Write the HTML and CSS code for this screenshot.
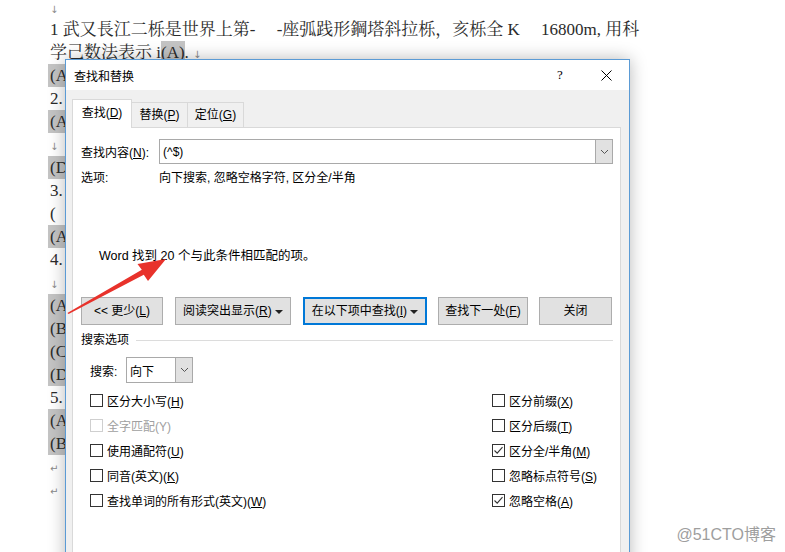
FILE: index.html
```html
<!DOCTYPE html>
<html lang="zh-CN">
<head>
  <meta charset="UTF-8">
  <title>查找和替换</title>
  <link rel="stylesheet" href="styles.css">
</head>
<body>

<div class="doc">
  <p class="first"><span class="pm">↓</span></p>
  <p>1 武又長江二栎是世界上第-&nbsp;&nbsp;&nbsp;&nbsp;&nbsp;-座弧践形鋼塔斜拉栎，亥栎全 K&nbsp;&nbsp;&nbsp;&nbsp;&nbsp;16800m,&nbsp;用科</p>
  <p>学己数法表示 i<span class="hl-in">(A)</span>. <span class="pm">↓</span></p>
  <p><span class="hl">(A</span></p>
  <p>2.</p>
  <p><span class="hl">(A</span></p>
  <p><span class="pm">↓</span></p>
  <p><span class="hl">(D</span></p>
  <p>3.</p>
  <p>(</p>
  <p><span class="hl">(A</span></p>
  <p>4.</p>
  <p><span class="pm">↓</span></p>
  <p><span class="hl">(A</span></p>
  <p><span class="hl">(B</span></p>
  <p><span class="hl">(C</span></p>
  <p><span class="hl">(D</span></p>
  <p>5.</p>
  <p><span class="hl">(A</span></p>
  <p><span class="hl">(B</span></p>
  <p><span class="pm">↵</span></p>
  <p><span class="pm">↵</span></p>
</div>

<div class="dialog">
  <div class="titlebar">
    <span class="title">查找和替换</span>
    <span class="help">?</span>
    <span class="close">
      <svg width="11" height="11" viewBox="0 0 11 11"><path d="M0.5 0.5 L10.5 10.5 M10.5 0.5 L0.5 10.5" stroke="#000" stroke-width="1" fill="none"/></svg>
    </span>
  </div>

  <div class="tabs">
    <div class="tab active">查找(<u>D</u>)</div>
    <div class="tab">替换(<u>P</u>)</div>
    <div class="tab">定位(<u>G</u>)</div>
  </div>

  <div class="panel">
    <div class="find-row">
      <label class="find-label">查找内容(<u>N</u>):</label>
      <div class="combo">
        <span class="combo-text">(^$)</span>
        <span class="combo-drop">
          <svg width="9" height="6" viewBox="0 0 9 6"><path d="M1 1 L4.5 4.5 L8 1" stroke="#555" stroke-width="1" fill="none"/></svg>
        </span>
      </div>
    </div>

    <div class="opts-row">
      <span class="opts-label">选项:</span>
      <span>向下搜索, 忽略空格字符, 区分全/半角</span>
    </div>

    <div class="result">Word 找到 20 个与此条件相匹配的项。</div>

    <div class="buttons">
      <div class="btn b-less">&lt;&lt; 更少(<u>L</u>)</div>
      <div class="btn b-read">阅读突出显示(<u>R</u>) <span class="caret"></span></div>
      <div class="btn b-in focus">在以下项中查找(<u>I</u>) <span class="caret"></span></div>
      <div class="btn b-next">查找下一处(<u>F</u>)</div>
      <div class="btn b-close">关闭</div>
    </div>

    <div class="group-title">
      <span>搜索选项</span>
      <span class="rule"></span>
    </div>

    <div class="search-dir">
      <label class="dir-label">搜索:</label>
      <div class="select">
        <span class="select-text">向下</span>
        <span class="select-drop">
          <svg width="9" height="6" viewBox="0 0 9 6"><path d="M1 1 L4.5 4.5 L8 1" stroke="#555" stroke-width="1" fill="none"/></svg>
        </span>
      </div>
    </div>

    <div class="checks">
      <div class="col left">
        <div class="check"><span class="box"></span><span>区分大小写(<u>H</u>)</span></div>
        <div class="check disabled"><span class="box"></span><span>全字匹配(Y)</span></div>
        <div class="check"><span class="box"></span><span>使用通配符(<u>U</u>)</span></div>
        <div class="check"><span class="box"></span><span>同音(英文)(<u>K</u>)</span></div>
        <div class="check"><span class="box"></span><span>查找单词的所有形式(英文)(<u>W</u>)</span></div>
      </div>
      <div class="col right">
        <div class="check"><span class="box"></span><span>区分前缀(<u>X</u>)</span></div>
        <div class="check"><span class="box"></span><span>区分后缀(<u>T</u>)</span></div>
        <div class="check"><span class="box"><svg width="11" height="11" viewBox="0 0 11 11"><path d="M1.5 5.5 L4.2 8.2 L9.5 2.2" stroke="#333" stroke-width="1.1" fill="none"/></svg></span><span>区分全/半角(<u>M</u>)</span></div>
        <div class="check"><span class="box"></span><span>忽略标点符号(<u>S</u>)</span></div>
        <div class="check"><span class="box"><svg width="11" height="11" viewBox="0 0 11 11"><path d="M1.5 5.5 L4.2 8.2 L9.5 2.2" stroke="#333" stroke-width="1.1" fill="none"/></svg></span><span>忽略空格(<u>A</u>)</span></div>
      </div>
    </div>
  </div>
</div>

<!-- annotation arrow drawn on top of the screenshot -->
<svg class="arrow" width="120" height="80" viewBox="0 0 120 80">
  <polygon points="7.4,63.0 8.6,64.0 83.8,24.8 88,31 106,9 77.5,14 81.8,19.8" fill="#e8322b"/>
</svg>

<div class="watermark">@51CTO博客</div>

</body>
</html>
```

FILE: styles.css
```css
html, body {
  margin: 0;
  height: 100%;
  overflow: hidden;
}

body {
  background: #fff;
  position: relative;
  font-family: "Liberation Sans", "Noto Sans CJK SC", sans-serif;
}

/* document behind the dialog */
.doc {
  padding-left: 50px;
  font-family: "Liberation Serif", "Noto Serif CJK SC", "Noto Sans CJK SC", serif;
  font-size: 17px;
  line-height: 23px;
  color: #2b2b2b;
}

.doc p {
  margin: 0;
  height: 23px;
  white-space: nowrap;
}

.doc p.first {
  height: 18px;
  line-height: 16px;
}

.doc .pm {
  font-family: "DejaVu Sans", sans-serif;
  font-size: 10px;
  color: #8a8a8a;
}

.doc .hl {
  display: inline-block;
  width: 30px;
  margin-left: -2px;
  padding-left: 2px;
  background: #c4c4c4;
}

.doc .hl-in {
  display: inline-block;
  background: #c4c4c4;
}

/* dialog window */
.dialog {
  position: absolute;
  left: 65px;
  top: 59px;
  width: 563px;
  height: 520px;
  border: 1px solid #5b9bd5;
  background: #f0f0f0;
  box-shadow: 0 0 16px rgba(0,0,0,0.28);
  font-size: 12px;
  color: #000;
}

.titlebar {
  height: 30px;
  background: #fff;
  display: flex;
  align-items: center;
  padding-left: 8px;
}

.title {
  flex: 1;
}

.help, .close {
  width: 46px;
  height: 30px;
  display: flex;
  align-items: center;
  justify-content: center;
}

.help {
  font-family: "Liberation Serif", serif;
  font-size: 13px;
}

.tabs {
  display: flex;
  align-items: flex-end;
  margin: 9px 0 0 6px;
  height: 28px;
}

.tab {
  box-sizing: border-box;
  width: 56px;
  height: 25px;
  line-height: 24px;
  text-align: center;
  border: 1px solid #d9d9d9;
  border-bottom: none;
  border-left: none;
  background: #f0f0f0;
}

.tab.active {
  width: 60px;
  height: 29px;
  line-height: 27px;
  margin-bottom: -1px;
  border-left: 1px solid #d9d9d9;
  background: #fff;
  position: relative;
  z-index: 1;
}

.panel {
  margin: 0 8px 0 6px;
  height: 440px;
  border: 1px solid #d9d9d9;
  background: #fff;
  padding: 0 7px 0 8px;
}

.find-row {
  display: flex;
  margin-top: 11px;
  height: 25px;
  align-items: center;
}

.find-label {
  width: 78px;
}

.combo {
  flex: 1;
  box-sizing: border-box;
  height: 25px;
  border: 1px solid #a9a9a9;
  display: flex;
  align-items: center;
}

.combo-text {
  flex: 1;
  padding-left: 3px;
}

.combo-drop, .select-drop {
  width: 16px;
  height: 100%;
  background: #e1e1e1;
  border-left: 1px solid #a9a9a9;
  display: flex;
  align-items: center;
  justify-content: center;
}

.opts-row {
  display: flex;
  margin-top: 6px;
  line-height: 16px;
}

.opts-label {
  width: 78px;
}

.result {
  margin-top: 62px;
  padding-left: 18px;
  line-height: 16px;
  font-size: 12.5px;
}

.buttons {
  display: flex;
  margin-top: 33px;
}

.btn {
  box-sizing: border-box;
  height: 28px;
  line-height: 26px;
  border: 1px solid #adadad;
  background: #e1e1e1;
  text-align: center;
  white-space: nowrap;
}

.btn.focus {
  border: 2px solid #0078d7;
  line-height: 24px;
}

.b-less { width: 82px; }
.b-read { width: 116px; margin-left: 12px; }
.b-in { width: 124px; margin-left: 12px; }
.b-next { width: 90px; margin-left: 11px; }
.b-close { width: 73px; margin-left: 11px; }

.caret {
  display: inline-block;
  vertical-align: middle;
  width: 0;
  height: 0;
  border-left: 4px solid transparent;
  border-right: 4px solid transparent;
  border-top: 4px solid #222;
}

.group-title {
  display: flex;
  align-items: center;
  margin-top: 7px;
  line-height: 16px;
}

.group-title .rule {
  flex: 1;
  height: 1px;
  margin-left: 7px;
  background: #dcdcdc;
}

.search-dir {
  display: flex;
  align-items: center;
  margin-top: 9px;
  padding-left: 9px;
}

.dir-label {
  width: 36px;
}

.select {
  box-sizing: border-box;
  width: 67px;
  height: 26px;
  border: 1px solid #a9a9a9;
  display: flex;
  align-items: center;
}

.select-text {
  flex: 1;
  padding-left: 3px;
}

.checks {
  display: flex;
  margin-top: 5px;
}

.col.left {
  width: 402px;
  padding-left: 9px;
}

.check {
  height: 25px;
  display: flex;
  align-items: center;
}

.check .box {
  box-sizing: border-box;
  width: 13px;
  height: 13px;
  border: 1px solid #333;
  background: #fff;
  margin-right: 4px;
  display: flex;
  align-items: center;
  justify-content: center;
}

.check.disabled {
  color: #a0a0a0;
}

.check.disabled .box {
  border-color: #cfcfcf;
}

/* overlays */
.arrow {
  position: absolute;
  left: 60px;
  top: 250px;
}

.watermark {
  position: absolute;
  right: 9px;
  bottom: 7px;
  font-size: 16px;
  line-height: 20px;
  color: #9e9e9e;
}
```
